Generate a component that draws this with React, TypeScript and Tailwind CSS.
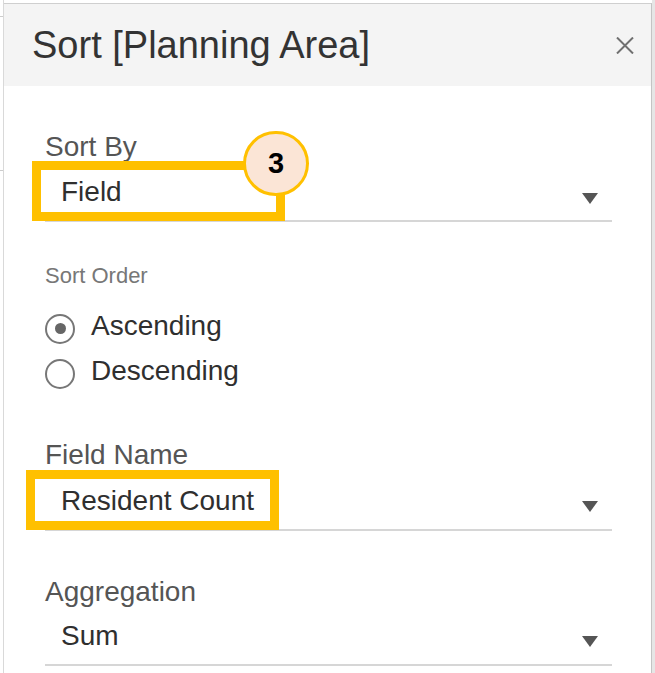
import React from "react"

function Arrow({ className }: { className?: string }) {
  return (
    <svg width="16" height="11" viewBox="0 0 16 11" className={className}>
      <path d="M0 0 H16 L8 11 Z" fill="#555555" />
    </svg>
  )
}

type FieldProps = {
  label: string
  value: string
  labelGap: string
  arrowTop: string
}

function DropdownField({ label, value, labelGap, arrowTop }: FieldProps) {
  return (
    <div className="flex flex-col">
      <div className="text-[28px] leading-[28px] text-[#555555]">{label}</div>
      <div className={`flex items-start justify-between pl-[16px] pr-[14px] pb-[14px] border-b-2 border-[#d6d6d6] ${labelGap}`}>
        <span className="text-[28px] leading-[28px] text-[#2f2f2f]">{value}</span>
        <Arrow className={arrowTop} />
      </div>
    </div>
  )
}

function Radio({ label, checked }: { label: string; checked?: boolean }) {
  return (
    <div className="flex items-center h-[45px]">
      <div className="w-[30px] h-[30px] rounded-full border-2 border-[#777777] flex items-center justify-center">
        {checked && <div className="w-[11px] h-[11px] rounded-full bg-[#666666]" />}
      </div>
      <span className="ml-[16px] mb-[5px] text-[28px] leading-[28px] text-[#2f2f2f]">{label}</span>
    </div>
  )
}

export default function App() {
  return (
    <div className="w-[655px] h-[673px] overflow-hidden bg-white flex font-['Liberation_Sans',Arial,sans-serif]">
      {/* left edge of the window behind */}
      <div className="w-[4px] shrink-0 border-r border-[#d9d9d9] flex flex-col">
        <div className="h-[16px]" />
        <div className="h-px bg-[#cccccc]" />
        <div className="h-[153px]" />
        <div className="h-px bg-[#cccccc]" />
      </div>

      <div className="relative flex-1 mt-[3px] flex flex-col border-t border-[#cfcfcf] border-r border-r-[#c4c4c4]">
        <div className="h-[82px] bg-[#f4f4f4] flex items-center justify-between pl-[28px] pr-[17px]">
          <span className="text-[38px] leading-[38px] text-[#333333]">Sort [Planning Area]</span>
          <svg width="18" height="17" viewBox="0 0 18 17">
            <path d="M1 0.5 L17 16.5 M17 0.5 L1 16.5" stroke="#707070" strokeWidth="2" />
          </svg>
        </div>

        <div className="flex flex-col pl-[41px] pr-[39px]">
          <div className="mt-[47px]">
            <DropdownField label="Sort By" value="Field" labelGap="mt-[17px]" arrowTop="mt-[15px]" />
          </div>

          <div className="mt-[43px] text-[22px] leading-[22px] text-[#777777]">Sort Order</div>
          <div className="mt-[19px] flex flex-col">
            <Radio label="Ascending" checked />
            <Radio label="Descending" />
          </div>

          <div className="mt-[45px]">
            <DropdownField label="Field Name" value="Resident Count" labelGap="mt-[18px]" arrowTop="mt-[14px]" />
          </div>

          <div className="mt-[47px]">
            <DropdownField label="Aggregation" value="Sum" labelGap="mt-[16px]" arrowTop="mt-[14px]" />
          </div>
        </div>

        {/* annotation overlays */}
        <div className="absolute left-[28px] top-[157px] w-[253px] h-[60px] border-[9px] border-[#ffc000]" />
        <div className="absolute left-[22px] top-[466px] w-[253px] h-[60px] border-[9px] border-[#ffc000]" />
        <div className="absolute left-[239px] top-[127px] w-[66px] h-[65px] rounded-full border-[3px] border-[#ffc000] bg-[#fbe5d6] flex items-center justify-center">
          <span className="text-[29px] font-bold text-black leading-none">3</span>
        </div>
      </div>

      <div className="w-[3px] shrink-0 bg-[#e6e6e6]" />
    </div>
  )
}
